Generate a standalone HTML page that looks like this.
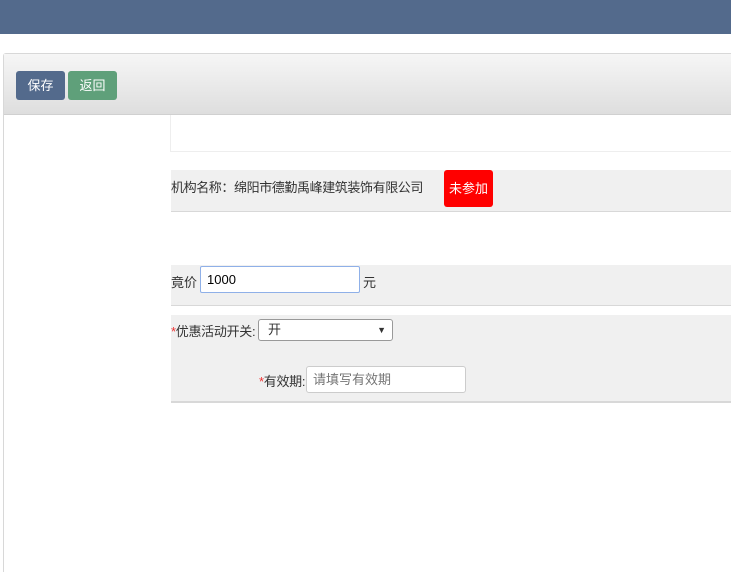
<!DOCTYPE html><html style="overflow:hidden;height:572px"><head><style>
body{margin:0;width:731px;height:572px;overflow:hidden;background:#fff;font-family:"Liberation Sans","Noto Sans CJK SC",sans-serif;font-size:13px;color:#333;position:relative}
.a{position:absolute}
.btn{position:absolute;top:71px;height:29px;width:49px;border-radius:3px;color:#fff;font-size:13px;line-height:29px;text-align:center}
.gray{position:absolute;left:171px;right:0;background:#f0f0f0}
input,.sel{position:absolute;box-sizing:border-box;font-family:inherit;font-size:13px}
</style></head><body>
<div class="a" style="left:0;top:0;width:731px;height:34px;background:#536a8c"></div>
<div class="a" style="left:3px;top:53px;width:728px;height:519px;border:1px solid #d8d8d8;border-right:none;border-bottom:none;border-radius:3px 0 0 0;box-sizing:border-box"></div>
<div class="a" style="left:4px;top:54px;width:727px;height:60px;background:linear-gradient(#f6f6f6,#dedede);border-bottom:1px solid #d0d0d0"></div>
<div class="btn" style="left:16px;background:#536a8c">保存</div>
<div class="btn" style="left:68px;background:#5fa07a">返回</div>
<div class="a" style="left:170px;top:115px;width:1px;height:37px;background:#eee"></div>
<div class="a" style="left:171px;top:151px;right:0;height:1px;background:#eee"></div>
<div class="gray" style="top:170px;height:41px;border-bottom:1px solid #d8d8d8"></div>
<div class="a" style="left:171px;top:180px;line-height:16px;letter-spacing:-0.4px">机构名称：绵阳市德勤禹峰建筑装饰有限公司</div>
<div class="a" style="left:444px;top:170px;width:49px;height:37px;background:#f00;border-radius:3px;color:#fff;line-height:37px;text-align:center">未参加</div>
<div class="gray" style="top:265px;height:40px;border-bottom:1px solid #d8d8d8"></div>
<div class="a" style="left:171px;top:275px;line-height:16px">竟价</div>
<input style="left:200px;top:266px;width:160px;height:27px;border:1px solid #8fb0e8;border-radius:2px;padding:0 6px" value="1000">
<div class="a" style="left:363px;top:275px;line-height:16px">元</div>
<div class="gray" style="top:315px;height:86px;border-bottom:2px solid #d8d8d8"></div>
<div class="a" style="left:171px;top:324px;line-height:16px;letter-spacing:-0.3px"><span style="color:#e33">*</span>优惠活动开关:</div>
<div class="sel" style="left:258px;top:319px;width:135px;height:22px;border:1px solid #999;border-radius:3px;background:#fff;line-height:20px;padding-left:9px">开<span style="position:absolute;right:6px;top:0;font-size:9px">▼</span></div>
<div class="a" style="left:259px;top:374px;line-height:16px;letter-spacing:-0.3px"><span style="color:#e33">*</span>有效期:</div>
<input style="left:306px;top:366px;width:160px;height:27px;border:1px solid #ccc;border-radius:3px;padding:0 6px" placeholder="请填写有效期">
</body></html>
